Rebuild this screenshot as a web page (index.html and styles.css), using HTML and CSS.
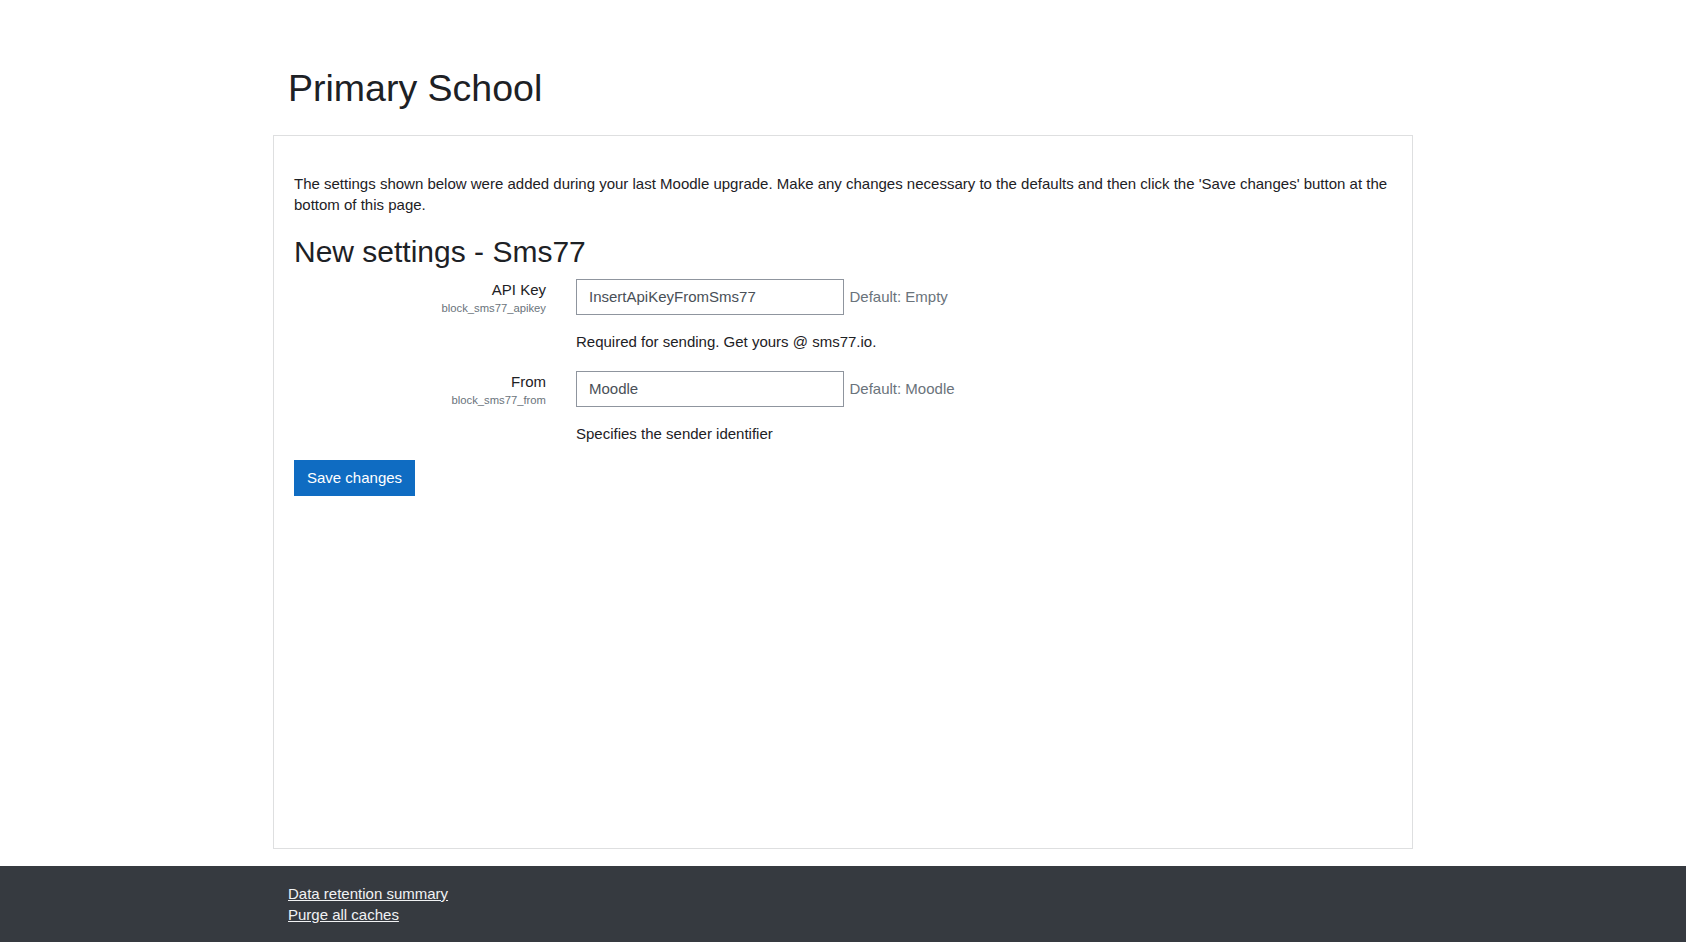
FILE: index.html
```html
<!DOCTYPE html>
<html lang="en">
<head>
<meta charset="utf-8">
<title>Primary School: New settings</title>
<link rel="stylesheet" href="styles.css">
</head>
<body>
<div class="page">
  <header class="page-header">
    <h1 class="site-name">Primary School</h1>
  </header>
  <main class="card">
    <p class="intro">The settings shown below were added during your last Moodle upgrade. Make any changes necessary to the defaults and then click the 'Save changes' button at the bottom of this page.</p>
    <h2 class="section-title">New settings - Sms77</h2>
    <form class="settings-form">
      <div class="form-item">
        <div class="form-label">
          <label for="apikey">API Key</label>
          <span class="form-shortname">block_sms77_apikey</span>
        </div>
        <div class="form-setting">
          <input id="apikey" class="form-control" type="text" value="InsertApiKeyFromSms77">
          <span class="form-defaultinfo">Default: Empty</span>
        </div>
        <div class="form-description">Required for sending. Get yours @ sms77.io.</div>
      </div>
      <div class="form-item form-item-last">
        <div class="form-label">
          <label for="from">From</label>
          <span class="form-shortname">block_sms77_from</span>
        </div>
        <div class="form-setting">
          <input id="from" class="form-control" type="text" value="Moodle">
          <span class="form-defaultinfo">Default: Moodle</span>
        </div>
        <div class="form-description">Specifies the sender identifier</div>
      </div>
      <div class="form-buttons">
        <button type="button" class="btn-primary">Save changes</button>
      </div>
    </form>
  </main>
</div>
<footer class="page-footer">
  <div class="footer-inner">
    <a href="#" class="footer-link">Data retention summary</a>
    <a href="#" class="footer-link">Purge all caches</a>
  </div>
</footer>
</body>
</html>
```

FILE: styles.css
```css
* {
  box-sizing: border-box;
}

html, body {
  margin: 0;
  padding: 0;
}

body {
  font-family: "Liberation Sans", Arial, sans-serif;
  font-size: 15px;
  line-height: 21.4px;
  color: #1d2125;
  background: #ffffff;
  min-height: 100vh;
  display: flex;
  flex-direction: column;
}

.page {
  width: 1140px;
  margin: 0 auto;
  flex: 1 0 auto;
  display: flex;
  flex-direction: column;
  padding-top: 66px;
  padding-bottom: 17px;
}

.page-header {
  padding-left: 15px;
  margin-bottom: 24px;
}

.site-name {
  margin: 0;
  font-size: 37.5px;
  line-height: 45px;
  font-weight: 400;
}

.card {
  flex: 1 0 auto;
  border: 1px solid #dedfe0;
  padding: 37px 20px 20px 20px;
}

.intro {
  margin: 0 0 18px 0;
}

.section-title {
  margin: 0 0 9px 0;
  font-size: 30px;
  line-height: 36px;
  font-weight: 400;
}

.settings-form {
  margin: 0;
}

.form-item {
  display: grid;
  grid-template-columns: 25% 75%;
  margin: 0 -15px 18.5px -15px;
}

.form-item-last {
  margin-bottom: 16px;
}

.form-label {
  padding: 0 15px;
  text-align: right;
  display: flex;
  flex-direction: column;
  max-height: 36px;
}

.form-label label {
  line-height: 21.4px;
}

.form-shortname {
  font-size: 11.25px;
  line-height: 16.5px;
  color: #6a737b;
}

.form-setting {
  padding: 0 15px;
  display: flex;
  align-items: center;
  align-self: start;
}

.form-control {
  width: 268px;
  height: 36px;
  padding: 6px 12px;
  border: 1px solid #8f959e;
  border-radius: 0;
  font-family: inherit;
  font-size: 15px;
  color: #495057;
  background: #fff;
  margin: 0;
}

.form-defaultinfo {
  margin-left: 5.5px;
  color: #6a737b;
}

.form-description {
  grid-column: 2;
  padding: 0 15px;
  margin-top: 16px;
}

.form-buttons {
  display: flex;
}

.btn-primary {
  font-family: inherit;
  font-size: 15px;
  line-height: 22px;
  color: #ffffff;
  background: #0f6cc2;
  border: 1px solid #0f6cc2;
  border-radius: 0;
  padding: 6px 12px;
  height: 36px;
  cursor: pointer;
}

.page-footer {
  background: #363a40;
  flex: 0 0 auto;
  padding: 17px 0 16px 0;
}

.footer-inner {
  width: 1140px;
  margin: 0 auto;
  padding-left: 15px;
  display: flex;
  flex-direction: column;
  align-items: flex-start;
}

.footer-link {
  color: #f1f2f4;
  text-decoration: underline;
  line-height: 21.7px;
}
```
